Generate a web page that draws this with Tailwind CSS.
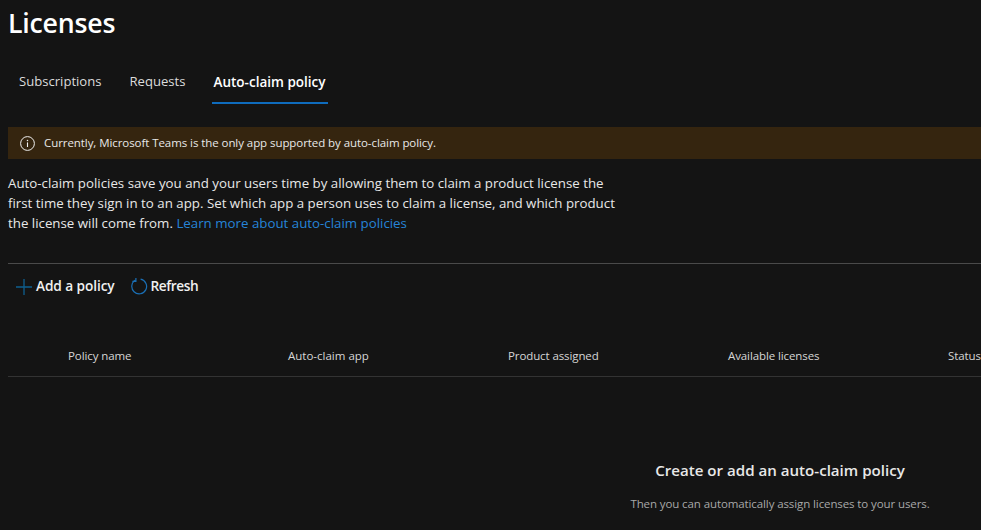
<!DOCTYPE html>
<html lang="en">
<head>
  <meta charset="utf-8" />
  <title>Licenses</title>
  <script src="https://cdn.jsdelivr.net/npm/@tailwindcss/browser@4"></script>
</head>
<body class="h-[530px] overflow-hidden bg-[#141414] text-[#e8e8e8] font-['Open_Sans','Noto_Sans',sans-serif]">
  <div class="w-[1544px] ml-2">
    <h1 class="h-[49px] pt-[5px] text-[26.7px] leading-[36px] font-semibold text-white tracking-[-0.2px]">Licenses</h1>

    <!-- tabs -->
    <div class="flex h-[55px] ml-[4px] text-[13.1px]">
      <div class="px-[7px] pt-[23px] mr-[14px] text-[#dcdcdc]">Subscriptions</div>
      <div class="px-[7px] pt-[23px] mr-[19px] text-[#dcdcdc]">Requests</div>
      <div class="w-[116px] h-[55px] pt-[23px] text-center text-[13.5px] font-semibold text-white border-b-2 border-[#0f6cbd]">Auto-claim policy</div>
    </div>

    <!-- banner -->
    <div class="flex items-center h-[32px] mt-[23px] pl-[12px] bg-[#35250f] text-[11.5px] tracking-[-0.07px] text-[#e8e8e8]">
      <svg class="w-[15px] h-[15px] mr-[9px]" viewBox="0 0 15 15" fill="none" stroke="#f0f0f0">
        <circle cx="7.5" cy="7.5" r="6.9" stroke-width="1" />
        <path d="M7.5 6.4v4.6" stroke-width="1.1" />
        <circle cx="7.5" cy="4.4" r="0.75" fill="#f0f0f0" stroke="none" />
      </svg>
      <span>Currently, Microsoft Teams is the only app supported by auto-claim policy.</span>
    </div>

    <!-- description -->
    <p class="w-[620px] mt-[14px] text-[13.3px] leading-[20px] text-[#e8e8e8]">
      Auto-claim policies save you and your users time by allowing them to claim a product license the first time they sign in to an app. Set which app a person uses to claim a license, and which product the license will come from. <a class="text-[#2684d8]">Learn more about auto-claim policies</a>
    </p>

    <!-- command bar -->
    <div class="flex items-center h-[46px] mt-[30px] pl-[8px] border-t border-[#4a4a4a] text-[13.7px] font-semibold tracking-[-0.1px] text-[#f0f0f0]">
      <svg class="w-[16px] h-[16px] mr-[4px]" viewBox="0 0 16 16" fill="none" stroke="#0e5f8f" stroke-width="1.3">
        <path d="M8 0v16M0 8h16" />
      </svg>
      <span class="mr-[16px]">Add a policy</span>
      <svg class="w-[17px] h-[17px] mr-[3px]" viewBox="0 0 17 17" fill="none" stroke="#1a6fb5" stroke-width="1.2">
        <path d="M4.6 2A7.4 7.4 0 1 0 9.6 1.2" />
        <path d="M4.9 0v3.4H1.4" />
      </svg>
      <span class="tracking-[-0.45px]">Refresh</span>
    </div>

    <!-- table header -->
    <div class="grid grid-cols-[220px_220px_220px_220px_220px] h-[69px] mt-[-1px] pl-[60px] pt-[39px] border-b border-[#333333] text-[11.5px] tracking-[-0.1px] text-[#d6d6d6]">
      <div>Policy name</div>
      <div class="tracking-[0px]">Auto-claim app</div>
      <div>Product assigned</div>
      <div>Available licenses</div>
      <div>Status</div>
    </div>

    <!-- empty state -->
    <div class="flex flex-col items-center pt-[82px]">
      <h2 class="text-[15.1px] leading-[22px] font-semibold text-[#e8e8e8]">Create or add an auto-claim policy</h2>
      <p class="mt-[15px] text-[11.5px] leading-[16px] tracking-[-0.1px] text-[#a8a8a8]">Then you can automatically assign licenses to your users.</p>
    </div>
  </div>
</body>
</html>
